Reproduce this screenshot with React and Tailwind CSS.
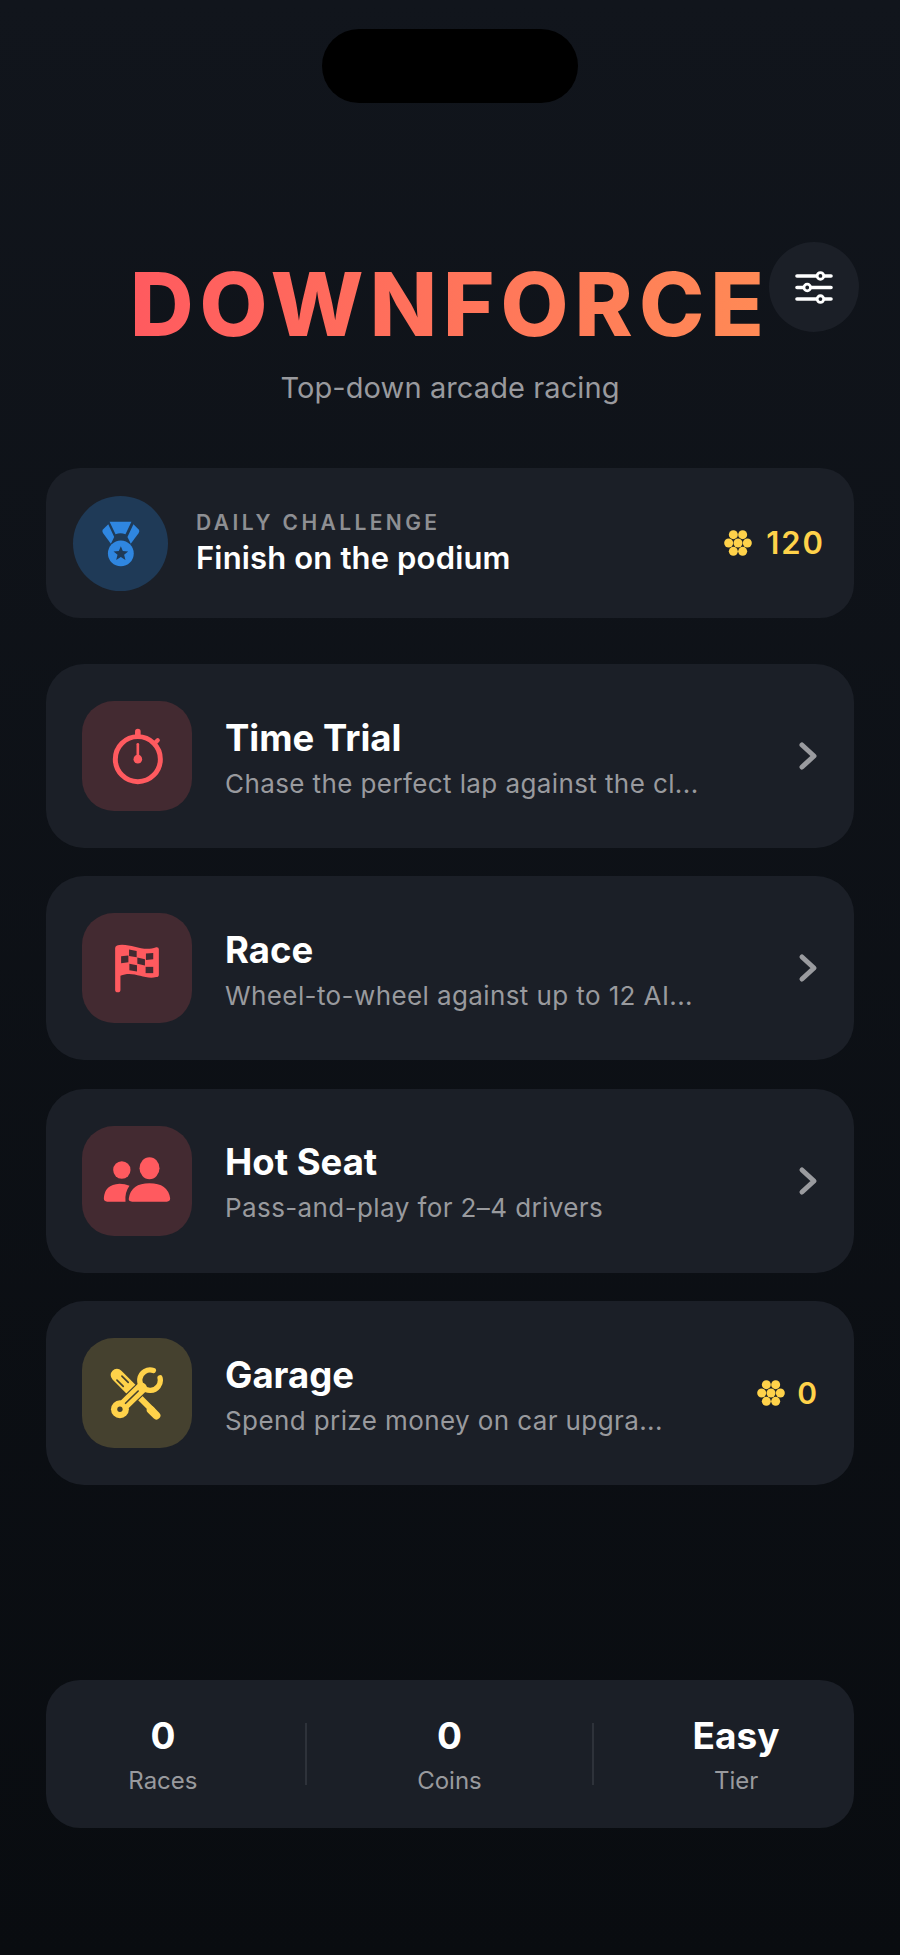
import React from 'react';

const Coin = ({ className = 'w-[28px] h-[28px]' }) => (
  <svg viewBox="-42 -42 84 84" className={className} fill="#ffd24a">
    <circle cx="0" cy="0" r="13.5" />
    <circle cx="-28" cy="0" r="13.5" />
    <circle cx="28" cy="0" r="13.5" />
    <circle cx="-14" cy="-25" r="13.5" />
    <circle cx="14" cy="-25" r="13.5" />
    <circle cx="-14" cy="25" r="13.5" />
    <circle cx="14" cy="25" r="13.5" />
  </svg>
);

const Sliders = () => (
  <svg viewBox="100 120 125 100" className="w-[42px] h-[33px]" fill="#1b1f27" stroke="#fff" strokeLinecap="round" strokeWidth="11">
    <path d="M111 135H214M111 170H214M111 205H214" fill="none" />
    <circle cx="182" cy="135" r="10" strokeWidth="8.5" />
    <circle cx="142" cy="170" r="10" strokeWidth="8.5" />
    <circle cx="182" cy="205" r="10" strokeWidth="8.5" />
  </svg>
);

const Medal = () => (
  <svg viewBox="180 170 125 160" className="w-[42px] h-[53px]" fill="#2f86e0">
    <path d="M208 184H274L256 222Q241 216 226 222Z" />
    <path d="M204 192L222 230L212 251L188 218Q184 212 188 208Z" />
    <path d="M280 192L262 230L272 251L296 218Q300 212 296 208Z" />
    <circle cx="242" cy="280" r="39" />
    <path d="M242 258L248 273L264 274L252 284L256 300L242 291L228 300L232 284L220 274L236 273Z" fill="#1f3a57" />
  </svg>
);

const Stopwatch = () => (
  <svg viewBox="150 140 160 175" className="w-[53px] h-[58px]" fill="none" stroke="#ff5a5f" strokeLinecap="round">
    <circle cx="231" cy="237" r="68" strokeWidth="15" />
    <path d="M231 154V166" strokeWidth="17" />
    <path d="M291 180L282 189" strokeWidth="13" />
    <path d="M231 192V235" strokeWidth="8" />
    <circle cx="231" cy="237" r="13" fill="#ff5a5f" stroke="none" />
  </svg>
);

const Flag = () => (
  <svg viewBox="160 160 150 160" className="w-[50px] h-[53px]" fill="#ff5a5f">
    <path d="M169 178Q170 168 190 168C225 168 255 190 293 176Q301 175 301 182V258Q301 266 293 266C255 275 225 245 185 262V305Q185 312 177 312Q169 312 169 305Z" />
    <g fill="#432a31">
      <path d="M211 183L234 187V206L211 202Z" />
      <path d="M187 203L209 201V221L187 224Z" />
      <path d="M236 207L259 212V231L236 226Z" />
      <path d="M262 195L284 193V212L262 214Z" />
      <path d="M212 226L235 230V249L212 245Z" />
      <path d="M261 235L284 235V254L261 254Z" />
    </g>
  </svg>
);

const Users = () => (
  <svg viewBox="125 153 215 150" className="w-[72px] h-[50px]" fill="#ff5a5f">
    <circle cx="187" cy="195" r="26" />
    <ellipse cx="270" cy="190" rx="30" ry="33" />
    <path d="M133 280Q135 238 180 236Q196 236 210 242Q195 262 198 290H143Q133 290 133 280Z" />
    <path d="M208 280Q215 235 270 235Q325 235 332 280Q332 290 322 290H218Q206 290 208 280Z" />
  </svg>
);

const Tools = () => (
  <svg viewBox="145 140 175 165" className="w-[58px] h-[55px]" fill="none" stroke="#ffd24a" strokeLinecap="round" strokeLinejoin="round">
    {/* screwdriver */}
    <path d="M172 167L222 217" strokeWidth="38" />
    <path d="M172 182L191 201M187 170L206 189" stroke="#45412f" strokeWidth="5" />
    <path d="M238 232L278 272" strokeWidth="18" />
    <path d="M274 272L291 289" strokeWidth="24" />
    {/* wrench */}
    <path d="M182 268L246 206" stroke="#45412f" strokeWidth="40" />
    <path d="M182 268L246 206" strokeWidth="33" />
    <circle cx="181" cy="270" r="27" fill="#ffd24a" stroke="none" />
    <path d="M198 252L236 215" stroke="#45412f" strokeWidth="5" />
    <circle cx="181" cy="270" r="8" fill="#45412f" stroke="none" />
    <path d="M282 153A31 31 0 1 0 302 175" strokeWidth="16" />
  </svg>
);

const Chevron = () => (
  <svg viewBox="0 0 20 30" className="w-[20px] h-[30px]" fill="none" stroke="#9a9b9f" strokeWidth="5" strokeLinecap="round" strokeLinejoin="round">
    <path d="M4 4L16 15L4 26" />
  </svg>
);

const modes = [
  { title: 'Time Trial', sub: 'Chase the perfect lap against the cl...', icon: <Stopwatch />, box: 'bg-[#432a31]' },
  { title: 'Race', sub: 'Wheel-to-wheel against up to 12 AI...', icon: <Flag />, box: 'bg-[#432a31]' },
  { title: 'Hot Seat', sub: 'Pass-and-play for 2–4 drivers', icon: <Users />, box: 'bg-[#432a31]' },
  { title: 'Garage', sub: 'Spend prize money on car upgra...', icon: <Tools />, box: 'bg-[#45412f]', coins: 0 },
];

const ModeCard = ({ title, sub, icon, box, coins }) => (
  <div className="h-[184px] rounded-[38px] bg-[#1b1f27] flex items-center pl-[36px] pr-[36px]">
    <div className={`w-[110px] h-[110px] rounded-[32px] flex items-center justify-center shrink-0 ${box}`}>{icon}</div>
    <div className="ml-[33px] flex-1 min-w-0 pt-[5px]">
      <div className="text-[36.5px] leading-[44px] font-bold text-white">{title}</div>
      <div className="mt-[6px] text-[26px] leading-[36px] tracking-[0.4px] text-[#999a9e]">{sub}</div>
    </div>
    {coins !== undefined ? (
      <div className="flex items-center gap-[12px] pr-[1px]">
        <Coin />
        <span className="text-[30px] font-semibold text-[#ffd24a]">{coins}</span>
      </div>
    ) : (
      <Chevron />
    )}
  </div>
);

const Stat = ({ value, label }) => (
  <div className="w-[183px] flex flex-col items-center pt-[2px]">
    <span className="text-[37px] leading-[44px] font-bold text-white">{value}</span>
    <span className="mt-[7px] text-[24px] leading-[32px] text-[#999a9e]">{label}</span>
  </div>
);

export default function App() {
  return (
    <div className="relative h-[1955px] w-[900px] overflow-hidden flex flex-col px-[46px] pb-[127px] bg-linear-to-b from-[#11151c] to-[#090c10] font-['Inter',sans-serif]">
      <div className="absolute left-[322px] top-[29px] w-[256px] h-[74px] rounded-full bg-black" />
      <div className="absolute left-[769px] top-[242px] w-[90px] h-[90px] rounded-full bg-[#1b1f27] flex items-center justify-center">
        <Sliders />
      </div>

      <h1 className="pt-[260px] text-center text-[88px] leading-[88px] font-extrabold tracking-[6px]">
        <span className="bg-linear-to-r from-[#ff5a5f] to-[#ff8a55] bg-clip-text text-transparent">DOWNFORCE</span>
      </h1>
      <p className="mt-[22px] text-center text-[29px] leading-[36px] tracking-[0.1px] text-[#999a9e]">Top-down arcade racing</p>

      <div className="mt-[62px] h-[150px] rounded-[34px] bg-[#1b1f27] flex items-center pl-[27px] pr-[29px]">
        <div className="w-[95px] h-[95px] rounded-full bg-[#1f3a57] flex items-center justify-center shrink-0">
          <Medal />
        </div>
        <div className="ml-[28px] flex-1">
          <div className="text-[21px] leading-[28px] font-semibold tracking-[3.4px] text-[#8e8f93]">DAILY CHALLENGE</div>
          <div className="mt-[2px] text-[31px] leading-[38px] font-semibold tracking-[0.15px] text-white">Finish on the podium</div>
        </div>
        <div className="flex items-center gap-[14px]">
          <Coin />
          <span className="text-[31px] font-semibold tracking-[2px] text-[#ffd24a]">120</span>
        </div>
      </div>

      <div className="mt-[46px] flex flex-col gap-[28.4px]">
        {modes.map((m) => (
          <ModeCard key={m.title} {...m} />
        ))}
      </div>

      <div className="mt-auto h-[148px] rounded-[34px] bg-[#1b1f27] flex items-center justify-around pr-[1px]">
        <Stat value="0" label="Races" />
        <div className="w-[2px] h-[62px] bg-[#2e323a]" />
        <Stat value="0" label="Coins" />
        <div className="w-[2px] h-[62px] bg-[#2e323a]" />
        <Stat value="Easy" label="Tier" />
      </div>
    </div>
  );
}
